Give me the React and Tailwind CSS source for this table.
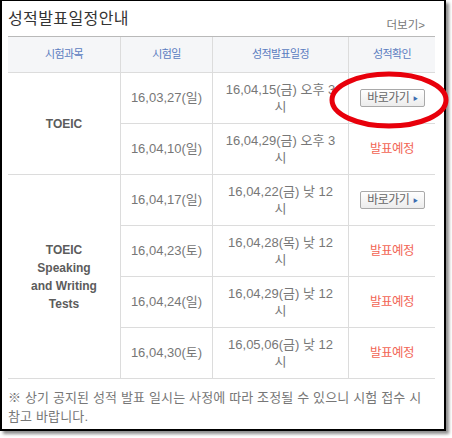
import React from 'react';

// 성적발표일정안내 박스 (캡처 화면 재현)
const FONT = '"Liberation Sans", "Noto Sans CJK KR", sans-serif';

const rows = [
    { date: '16,03,27(일)', result: ['16,04,15(금) 오후 3', '시'], status: 'link' },
    { date: '16,04,10(일)', result: ['16,04,29(금) 오후 3', '시'], status: 'wait' },
    { date: '16,04,17(일)', result: ['16,04,22(금) 낮 12', '시'], status: 'link' },
    { date: '16,04,23(토)', result: ['16,04,28(목) 낮 12', '시'], status: 'wait' },
    { date: '16,04,24(일)', result: ['16,04,29(금) 낮 12', '시'], status: 'wait' },
    { date: '16,04,30(토)', result: ['16,05,06(금) 낮 12', '시'], status: 'wait' },
];

function GoButton() {
    return (
        <button className="flex items-center h-[18px] w-[65px] pl-[3px] pr-[6px] border border-[#a9a9a9] rounded-[2px] bg-gradient-to-b from-white to-[#ececec] text-[12px] leading-none text-[#666] tracking-[-0.5px]">
            <span className="flex-1 text-center">바로가기</span>
            <span className="text-[5px] text-[#3b6cb0]">▶</span>
        </button>
    );
}

function StatusCell({ status }) {
    return (
        <div className="flex items-center justify-center h-[51px] border-b border-[#dcdcdc]">
            {status === 'link'
                ? <GoButton />
                : <span className="text-[12.5px] text-[#f26555] tracking-[-0.5px]">발표예정</span>}
        </div>
    );
}

export default function App() {
    return (
        <div className="w-[452px] h-[438px] bg-white" style={{ fontFamily: FONT }}>
            <div className="relative w-[446px] h-[431px] bg-white border-t border-l-2 border-r-2 border-b-2 border-black shadow-[3px_3px_3px_rgba(0,0,0,0.45)]">
                {/* 제목 + 더보기 */}
                <div className="flex justify-between items-start h-[35px] pl-[6px] pr-[19px]">
                    <h2 className="mt-[8px] text-[16px] leading-[20px] text-[#333] tracking-[0.4px]">성적발표일정안내</h2>
                    <span className="mt-[17px] text-[11.5px] leading-[14px] text-[#777]">더보기&gt;</span>
                </div>

                {/* 표 */}
                <div className="ml-[6px] w-[427px] border-t border-[#b9b9b9] grid grid-cols-[113px_92px_136px_86px]">
                    {/* 헤더 */}
                    {['시험과목', '시험일', '성적발표일정', '성적확인'].map((h, i) => (
                        <div
                            key={h}
                            className={`flex items-center justify-center h-[36px] bg-[#f5f6f8] border-b border-[#dcdcdc] text-[11px] tracking-[-0.6px] text-[#5a7cc0] ${i < 3 ? 'border-r' : ''}`}
                        >
                            {h}
                        </div>
                    ))}

                    {/* TOEIC */}
                    <div className="row-span-2 flex items-center justify-center border-r border-b border-[#dcdcdc] text-[12px] font-bold text-[#5c5c5c]">
                        TOEIC
                    </div>
                    {rows.slice(0, 2).map((r, i) => (
                        <React.Fragment key={'a' + i}>
                            <div className="flex items-center justify-center h-[51px] border-r border-b border-[#dcdcdc] text-[13px] text-[#777]">{r.date}</div>
                            <div className="flex flex-col items-center justify-center h-[51px] border-r border-b border-[#dcdcdc] text-[13px] leading-[17px] text-[#777]">
                                <span>{r.result[0]}</span>
                                <span>{r.result[1]}</span>
                            </div>
                            <StatusCell status={r.status} />
                        </React.Fragment>
                    ))}

                    {/* TOEIC Speaking and Writing Tests */}
                    <div className="row-span-4 flex items-center justify-center border-r border-b border-[#dcdcdc] text-center text-[12px] leading-[18px] font-bold text-[#5c5c5c]">
                        TOEIC<br />Speaking<br />and Writing<br />Tests
                    </div>
                    {rows.slice(2).map((r, i) => (
                        <React.Fragment key={'b' + i}>
                            <div className="flex items-center justify-center h-[51px] border-r border-b border-[#dcdcdc] text-[13px] text-[#777]">{r.date}</div>
                            <div className="flex flex-col items-center justify-center h-[51px] border-r border-b border-[#dcdcdc] text-[13px] leading-[17px] text-[#777]">
                                <span>{r.result[0]}</span>
                                <span>{r.result[1]}</span>
                            </div>
                            <StatusCell status={r.status} />
                        </React.Fragment>
                    ))}
                </div>

                {/* 안내 문구 */}
                <p className="pl-[6px] pt-[9px] text-[13px] leading-[19px] text-[#777] tracking-[0.15px] whitespace-nowrap">
                    ※ 상기 공지된 성적 발표 일시는 사정에 따라 조정될 수 있으니 시험 접수 시<br />
                    참고 바랍니다.
                </p>

                {/* 빨간 강조 표시 */}
                <svg className="absolute left-[326px] top-[69px] pointer-events-none" width="124" height="62">
                    <ellipse cx="61" cy="30" rx="57" ry="26" fill="none" stroke="#e8000b" strokeWidth="5" />
                </svg>
            </div>
        </div>
    );
}
